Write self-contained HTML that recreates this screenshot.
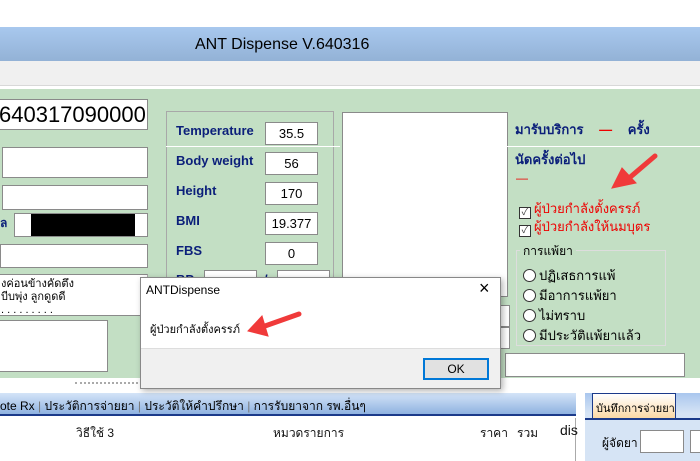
<!DOCTYPE html>
<html><head><meta charset="utf-8"><style>
*{margin:0;padding:0;box-sizing:border-box}
body{width:700px;height:461px;overflow:hidden;position:relative;background:#fff;font-family:"Liberation Sans","Noto Sans CJK SC",sans-serif;font-size:12px}
.a{position:absolute;white-space:nowrap}
.box{position:absolute;background:#fff;border:1px solid #8a8a8a}
.lbl{position:absolute;font-weight:bold;color:#0b1f7a;font-size:13px;white-space:nowrap}
.inp{position:absolute;background:#fff;border:1px solid #8a8a8a;width:53px;height:23px;text-align:center;line-height:21px;font-size:13px}
.th{position:absolute;font-size:12px;color:#111;white-space:nowrap}
.rad{display:inline-block;width:13px;height:13px;border:1px solid #333;border-radius:50%;background:#fff;vertical-align:-2px;margin-right:3px}
.chk{display:inline-block;width:12px;height:12px;border:1px solid #333;background:#fff;vertical-align:-2px;margin-right:3px;font-size:10px;line-height:10px;text-align:center;color:#444}
</style></head><body>
<div class="a" style="left:0;top:27px;width:700px;height:34px;background:linear-gradient(#a8c8ee,#93b2d6)"></div>
<div class="a" style="left:195px;top:36px;font-size:16px;color:#000">ANT Dispense V.640316</div>
<div class="a" style="left:0;top:61px;width:700px;height:25px;background:#f0f0f0;border-bottom:1px solid #d8d8d8"></div>
<div class="a" style="left:0;top:89px;width:700px;height:289px;background:#c3dfc4"></div>
<div class="box" style="left:-2px;top:99px;width:150px;height:31px;font-size:22px;line-height:29px">640317090000</div>
<div class="box" style="left:2px;top:147px;width:146px;height:31px"></div>
<div class="box" style="left:2px;top:185px;width:146px;height:25px"></div>
<div class="a" style="left:0;top:214px;font-weight:bold;color:#0b1f7a">ล</div>
<div class="box" style="left:14px;top:213px;width:134px;height:24px"></div>
<div class="a" style="left:31px;top:214px;width:104px;height:22px;background:#000"></div>
<div class="box" style="left:0;top:244px;width:148px;height:24px"></div>
<div class="box" style="left:-2px;top:274px;width:150px;height:42px;font-size:11px;line-height:13px;padding:3px 2px;overflow:hidden;border-right-color:#aaa">งค่อนข้างคัดตึง<br>บีบพุ่ง ลูกดูดดี<br>. . . . . . . . .</div>
<div class="box" style="left:-2px;top:320px;width:110px;height:52px"></div>
<div class="a" style="left:166px;top:111px;width:168px;height:270px;border:1px solid #a8a8a8"></div>
<div class="a" style="left:166px;top:146px;width:174px;height:1px;background:#fff"></div>
<div class="lbl" style="left:176px;top:123px">Temperature</div><div class="inp" style="left:265px;top:122px">35.5</div>
<div class="lbl" style="left:176px;top:153px">Body weight</div><div class="inp" style="left:265px;top:152px">56</div>
<div class="lbl" style="left:176px;top:183px">Height</div><div class="inp" style="left:265px;top:182px">170</div>
<div class="lbl" style="left:176px;top:213px">BMI</div><div class="inp" style="left:265px;top:212px">19.377</div>
<div class="lbl" style="left:176px;top:243px">FBS</div><div class="inp" style="left:265px;top:242px">0</div>
<div class="lbl" style="left:176px;top:272px">BP</div>
<div class="inp" style="left:204px;top:270px">110</div><div class="lbl" style="left:264px;top:272px">/</div><div class="inp" style="left:277px;top:270px">60</div>
<div class="box" style="left:342px;top:112px;width:166px;height:185px"></div>
<div class="box" style="left:490px;top:305px;width:20px;height:22px"></div>
<div class="box" style="left:490px;top:327px;width:20px;height:22px"></div>
<div class="lbl" style="left:515px;top:119px">มารับบริการ <span style="color:#e00;margin:0 12px">—</span> ครั้ง</div>
<div class="a" style="left:507px;top:146px;width:193px;height:1px;background:#fff"></div>
<div class="lbl" style="left:515px;top:149px">นัดครั้งต่อไป</div>
<div class="a" style="left:516px;top:171px;color:#e00">—</div>
<div class="a" style="left:519px;top:198px;color:#e00;font-size:13px"><span class="chk">✓</span>ผู้ป่วยกำลังตั้งครรภ์</div>
<div class="a" style="left:519px;top:216px;color:#e00;font-size:13px"><span class="chk">✓</span>ผู้ป่วยกำลังให้นมบุตร</div>
<div class="a" style="left:516px;top:250px;width:150px;height:96px;border:1px solid #ddd"></div>
<div class="a" style="left:520px;top:242px;background:#c3dfc4;padding:0 3px">การแพ้ยา</div>
<div class="a" style="left:523px;top:265px;font-size:13px"><span class="rad"></span>ปฏิเสธการแพ้</div>
<div class="a" style="left:523px;top:285px;font-size:13px"><span class="rad"></span>มีอาการแพ้ยา</div>
<div class="a" style="left:523px;top:305px;font-size:13px"><span class="rad"></span>ไม่ทราบ</div>
<div class="a" style="left:523px;top:325px;font-size:13px"><span class="rad"></span>มีประวัติแพ้ยาแล้ว</div>
<div class="box" style="left:505px;top:353px;width:180px;height:24px"></div>
<div class="a" style="left:75px;top:382px;width:75px;height:3px;border-top:2px dotted #aaa"></div>
<div class="a" style="left:0;top:393px;width:576px;height:23px;background:linear-gradient(#d4e4f8,#8fb2e0);border-bottom:2px solid #1b3a8a"></div>
<div class="a" style="left:0;top:397px;font-size:12px">ote Rx <span style="color:#777">|</span> ประวัติการจ่ายยา <span style="color:#777">|</span> ประวัติให้คำปรึกษา <span style="color:#777">|</span> การรับยาจาก รพ.อื่นๆ</div>
<div class="a" style="left:0;top:418px;width:576px;height:43px;background:#fff;border-right:1px solid #aaa"></div>
<div class="th" style="left:76px;top:424px">วิธีใช้ 3</div>
<div class="th" style="left:273px;top:424px">หมวดรายการ</div>
<div class="th" style="left:480px;top:424px">ราคา</div>
<div class="th" style="left:517px;top:424px">รวม</div>
<div class="th" style="left:560px;top:422px;font-size:14px">dis</div>
<div class="a" style="left:585px;top:393px;width:115px;height:68px;background:linear-gradient(#a9c6ee,#d6e4f5 30%)"></div>
<div class="a" style="left:592px;top:393px;width:84px;height:25px;background:linear-gradient(#fff,#fcd9a5);border:1px solid #1b3a8a;border-bottom:none;font-size:11px;padding:5px 3px;overflow:hidden">บันทึกการจ่ายยา</div>
<div class="a" style="left:585px;top:418px;width:115px;height:2px;background:#1b3a8a"></div>
<div class="a" style="left:602px;top:434px">ผู้จัดยา</div>
<div class="box" style="left:640px;top:430px;width:44px;height:23px"></div>
<div class="box" style="left:690px;top:430px;width:20px;height:23px"></div>
<div class="a" style="left:140px;top:277px;width:361px;height:112px;background:#fff;border:1px solid #888;box-shadow:2px 2px 6px rgba(0,0,0,.3)"></div>
<div class="a" style="left:146px;top:283px;font-size:12px">ANTDispense</div>
<div class="a" style="left:479px;top:278px;font-size:18px;font-weight:lighter">×</div>
<div class="a" style="left:150px;top:320px;font-size:11px">ผู้ป่วยกำลังตั้งครรภ์</div>
<div class="a" style="left:141px;top:348px;width:359px;height:40px;background:#f0f0f0;border-top:1px solid #ddd"></div>
<div class="a" style="left:423px;top:358px;width:66px;height:22px;background:#e1e1e1;border:2px solid #0078d7;text-align:center;line-height:18px;font-size:12px">OK</div>
<svg class="a" style="left:0;top:0" width="700" height="461">
<g fill="#f03a3a" stroke="#f03a3a" stroke-linecap="round">
<line x1="655" y1="156" x2="628" y2="179" stroke-width="5"/>
<polygon points="612,188 622,168 636,183"/>
<line x1="299" y1="314" x2="265" y2="326" stroke-width="5"/>
<polygon points="248,331 262,316 268,336"/>
</g></svg>
</body></html>
